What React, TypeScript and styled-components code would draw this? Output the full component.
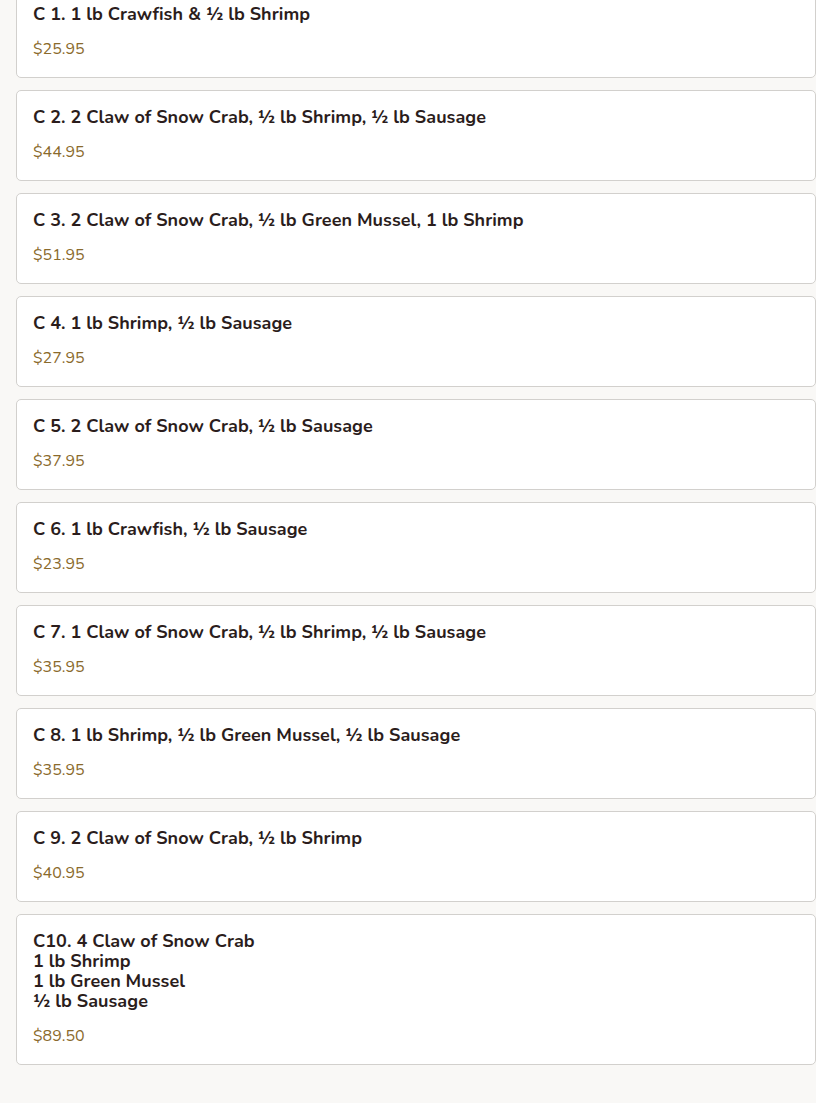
import React from 'react';
import styled, { createGlobalStyle } from 'styled-components';

const GlobalStyle = createGlobalStyle`
  body {
    margin: 0;
    background: #f9f8f6;
    font-family: Nunito, Lato, 'Open Sans', sans-serif;
  }
`;

const List = styled.div`
  display: flex;
  flex-direction: column;
  gap: 12px;
  padding: 0 0 38px 16px;
  margin-top: -13px;
`;

const Card = styled.div`
  background: #ffffff;
  border: 1px solid #d2d0cd;
  border-radius: 5px;
  padding: 16px;
  display: flex;
  flex-direction: column;
  gap: 13px;
`;

const Title = styled.div`
  color: #2b1d1c;
  font-size: 18px;
  font-weight: 700;
  line-height: 20px;
  letter-spacing: 0.04px;
  white-space: pre-line;
`;

const Price = styled.div`
  color: #8a6a2c;
  font-size: 16px;
  line-height: 24px;
`;

type Combo = {
  name: string;
  price: string;
};

const combos: Combo[] = [
  { name: 'C 1. 1 lb Crawfish & ½ lb Shrimp', price: '$25.95' },
  { name: 'C 2. 2 Claw of Snow Crab, ½ lb Shrimp, ½ lb Sausage', price: '$44.95' },
  { name: 'C 3. 2 Claw of Snow Crab, ½ lb Green Mussel, 1 lb Shrimp', price: '$51.95' },
  { name: 'C 4. 1 lb Shrimp, ½ lb Sausage', price: '$27.95' },
  { name: 'C 5. 2 Claw of Snow Crab, ½ lb Sausage', price: '$37.95' },
  { name: 'C 6. 1 lb Crawfish, ½ lb Sausage', price: '$23.95' },
  { name: 'C 7. 1 Claw of Snow Crab, ½ lb Shrimp, ½ lb Sausage', price: '$35.95' },
  { name: 'C 8. 1 lb Shrimp, ½ lb Green Mussel, ½ lb Sausage', price: '$35.95' },
  { name: 'C 9. 2 Claw of Snow Crab, ½ lb Shrimp', price: '$40.95' },
  {
    name: 'C10. 4 Claw of Snow Crab\n1 lb Shrimp\n1 lb Green Mussel\n½ lb Sausage',
    price: '$89.50',
  },
];

export default function App() {
  return (
    <>
      <GlobalStyle />
      <List>
        {combos.map((c) => (
          <Card key={c.name}>
            <Title>{c.name}</Title>
            <Price>{c.price}</Price>
          </Card>
        ))}
      </List>
    </>
  );
}
